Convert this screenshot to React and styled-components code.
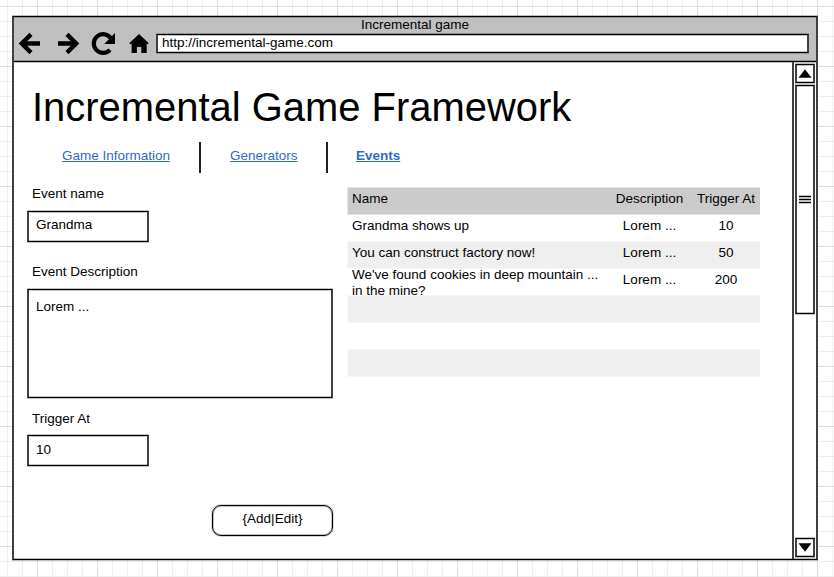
import React from "react";
import styled, { createGlobalStyle, css } from "styled-components";

const Global = createGlobalStyle`
  *, *::before, *::after { box-sizing: border-box; }
  html, body { margin: 0; padding: 0; }
  body { overflow: hidden; }
`;

const SOFT = "rgba(0, 0, 0, 0.25)";
const SIDE = "#404040";

const outline = css`
  border: 1px solid #000;
  border-left: 2px solid ${SIDE};
  border-right: 2px solid ${SIDE};
  box-shadow: 0 -1px 0 ${SOFT}, 0 1px 0 ${SOFT}, inset 0 1px 0 ${SOFT}, inset 0 -1px 0 ${SOFT};
`;

const Canvas = styled.div`
  width: 834px;
  height: 577px;
  padding: 16px 16px 17px 12px;
  overflow: hidden;
  color: #000;
  font: 13.5px/16px "Liberation Sans", Arial, sans-serif;
  background-color: #fff;
  background-image:
    linear-gradient(90deg, #dedede 1px, transparent 1px),
    linear-gradient(#dedede 1px, transparent 1px),
    linear-gradient(90deg, #eeeeee 1px, transparent 1px),
    linear-gradient(#eeeeee 1px, transparent 1px);
  background-size: 60px 60px, 60px 60px, 15px 15px, 15px 15px;
  background-position: 37px 0, 0 6px, 7px 0, 0 6px;
`;

const Window = styled.div`
  ${outline}
  width: 806px;
  height: 544px;
  display: flex;
  flex-direction: column;
  background: #fff;
`;

const Header = styled.header`
  height: 45px;
  flex: none;
  display: flex;
  flex-direction: column;
  background: #c0c0c0;
  border-bottom: 1px solid #000;
  box-shadow: 0 1px 0 ${SOFT}, inset 0 -1px 0 ${SOFT}, inset 0 1px 0 ${SOFT};
`;

const WindowTitle = styled.div`
  height: 17px;
  text-align: center;
  line-height: 16px;
`;

const Toolbar = styled.div`
  display: flex;
  align-items: flex-start;
`;

const Icons = styled.svg`
  width: 142px;
  height: 26px;
  margin-top: -3px;
  flex: none;
`;

const Address = styled.div`
  ${outline}
  width: 653px;
  height: 19px;
  padding-left: 4px;
  line-height: 16px;
  background: #fff;
`;

const Body = styled.div`
  flex: 1;
  min-height: 0;
  display: flex;
`;

const Page = styled.main`
  width: 778px;
  padding-left: 13px;
`;

const Heading = styled.h1`
  margin: 0;
  padding: 22px 0 0 5px;
  height: 80px;
  font-size: 39.95px;
  line-height: 46px;
  font-weight: 400;
  white-space: nowrap;
`;

const Nav = styled.nav`
  display: flex;
  height: 31px;
`;

const NavItem = styled.a`
  width: ${(p) => p.$width}px;
  padding-left: ${(p) => p.$indent}px;
  padding-top: 6px;
  color: #2f6bcb;
  font-weight: ${(p) => (p.$active ? 700 : 400)};
  text-decoration: underline;
  border-right: ${(p) => (p.$active ? "none" : "2px solid #202020")};
`;

const Columns = styled.div`
  display: flex;
  align-items: flex-start;
`;

const Form = styled.form`
  width: 306px;
  padding-top: 13px;
  display: flex;
  flex-direction: column;
`;

const Label = styled.label`
  padding-left: 5px;
  height: ${(p) => p.$height}px;
`;

const Field = styled.div`
  ${outline}
  width: ${(p) => (p.$wide ? 306 : 122)}px;
  height: ${(p) => (p.$wide ? 109 : 31)}px;
  padding: ${(p) => (p.$wide ? 9 : p.$low ? 6 : 5)}px 7px 0;
  margin-bottom: ${(p) => p.$gap}px;
`;

const Button = styled.button`
  align-self: flex-end;
  width: 121px;
  height: 31px;
  margin: 0;
  padding: 0 0 4px;
  border: 1px solid #000;
  box-shadow: 0 0 0 1px rgba(0, 0, 0, 0.16), inset 0 0 0 1px rgba(0, 0, 0, 0.25);
  border-radius: 9px;
  background: #fff;
  color: #000;
  font: inherit;
`;

const Table = styled.div`
  width: 413px;
  margin: 14px 0 0 14px;
`;

const rowFill = {
  head: ["#cbcbcb", "#e5e5e5"],
  shade: ["#efefef", "#f7f7f7"],
};

const Row = styled.div`
  height: 27px;
  display: grid;
  grid-template-columns: 260px 83px 70px;
  grid-template-rows: 24px;
  align-items: center;
  border-left: 1px solid transparent;
  ${(p) =>
    rowFill[p.$fill] &&
    css`
      background: ${rowFill[p.$fill][0]};
      background-clip: padding-box;
      border-left-color: ${rowFill[p.$fill][1]};
      box-shadow: inset 0 1px 0 ${rowFill[p.$fill][1]}, 0 1px 0 ${rowFill[p.$fill][1]};
    `}
`;

const Cell = styled.div`
  padding-left: ${(p) => (p.$center ? 0 : 4)}px;
  padding-top: ${(p) => (p.$double ? 6 : 0)}px;
  text-align: ${(p) => (p.$center ? "center" : "left")};
  white-space: pre;
`;

const Scrollbar = styled.div`
  width: 24px;
  border-left: 2px solid ${SIDE};
  padding: 2px 1px 2px 1px;
  display: flex;
  flex-direction: column;
  align-items: flex-start;
`;

const ScrollButton = styled.div`
  ${outline}
  width: 20px;
  height: 19px;
  flex: none;
  display: flex;
  justify-content: center;
  align-items: center;
  svg { display: block; }
`;

const Thumb = styled(ScrollButton)`
  height: 229px;
  margin: 2px 0 auto;
`;

const Arrow = ({ down }) => (
  <svg width="14" height="9" viewBox="0 0 14 9">
    <path d={down ? "M0.5 0.3H13.5L7 8.8Z" : "M0.5 8.7H13.5L7 0.2Z"} />
  </svg>
);

const Grip = () => (
  <svg width="12" height="9" viewBox="0 0 12 9">
    <path d="M0 1.5H12M0 4.5H12M0 7.5H12" stroke="#000" strokeWidth="1.6" />
  </svg>
);

const BrowserIcons = () => (
  <Icons viewBox="14 31 142 26">
    <g fill="none" stroke="#000">
      <path d="M40 43.5H22M31 34.4L21.8 43.5L31 52.6" strokeWidth="4.4" />
      <path d="M58 43.5H76M67 34.4L76.2 43.5L67 52.6" strokeWidth="4.4" />
      <path d="M110 49.8A9.3 9.3 0 1 1 111 38.6" strokeWidth="4.2" />
    </g>
    <path d="M115 33V44H104.2Z" />
    <path d="M139 34L148.8 43.2L147.4 44.2L146.7 43.6V53H141.3V47H136.9V53H131.6V43.6L130.6 44.2L129.2 43.2Z" />
  </Icons>
);

const events = [
  ["Grandma shows up", "Lorem ...", "10"],
  ["You can construct factory now!", "Lorem ...", "50"],
  ["We've found cookies in deep mountain ...\nin the mine?", "Lorem ...", "200"],
  ["", "", ""],
  ["", "", ""],
  ["", "", ""],
];

export default function App() {
  return (
    <>
      <Global />
      <Canvas>
        <Window>
          <Header>
            <WindowTitle>Incremental game</WindowTitle>
            <Toolbar>
              <BrowserIcons />
              <Address>http://incremental-game.com</Address>
            </Toolbar>
          </Header>
          <Body>
            <Page>
              <Heading>Incremental Game Framework</Heading>
              <Nav>
                <NavItem $width={174} $indent={35}>Game Information</NavItem>
                <NavItem $width={127} $indent={29}>Generators</NavItem>
                <NavItem $width={120} $indent={28} $active>Events</NavItem>
              </Nav>
              <Columns>
                <Form>
                  <Label $height={25}>Event name</Label>
                  <Field $gap={22}>Grandma</Field>
                  <Label $height={25}>Event Description</Label>
                  <Field $wide $gap={13}>Lorem ...</Field>
                  <Label $height={24}>Trigger At</Label>
                  <Field $low $gap={39}>10</Field>
                  <Button type="button">{"{Add|Edit}"}</Button>
                </Form>
                <Table>
                  <Row $fill="head">
                    <Cell>Name</Cell>
                    <Cell $center>Description</Cell>
                    <Cell $center>Trigger At</Cell>
                  </Row>
                  {events.map(([name, text, at], i) => (
                    <Row key={i} $fill={i % 2 ? "shade" : "plain"}>
                      <Cell $double={name.includes("\n")}>{name}</Cell>
                      <Cell $center>{text}</Cell>
                      <Cell $center>{at}</Cell>
                    </Row>
                  ))}
                </Table>
              </Columns>
            </Page>
            <Scrollbar>
              <ScrollButton><Arrow /></ScrollButton>
              <Thumb><Grip /></Thumb>
              <ScrollButton><Arrow down /></ScrollButton>
            </Scrollbar>
          </Body>
        </Window>
      </Canvas>
    </>
  );
}
